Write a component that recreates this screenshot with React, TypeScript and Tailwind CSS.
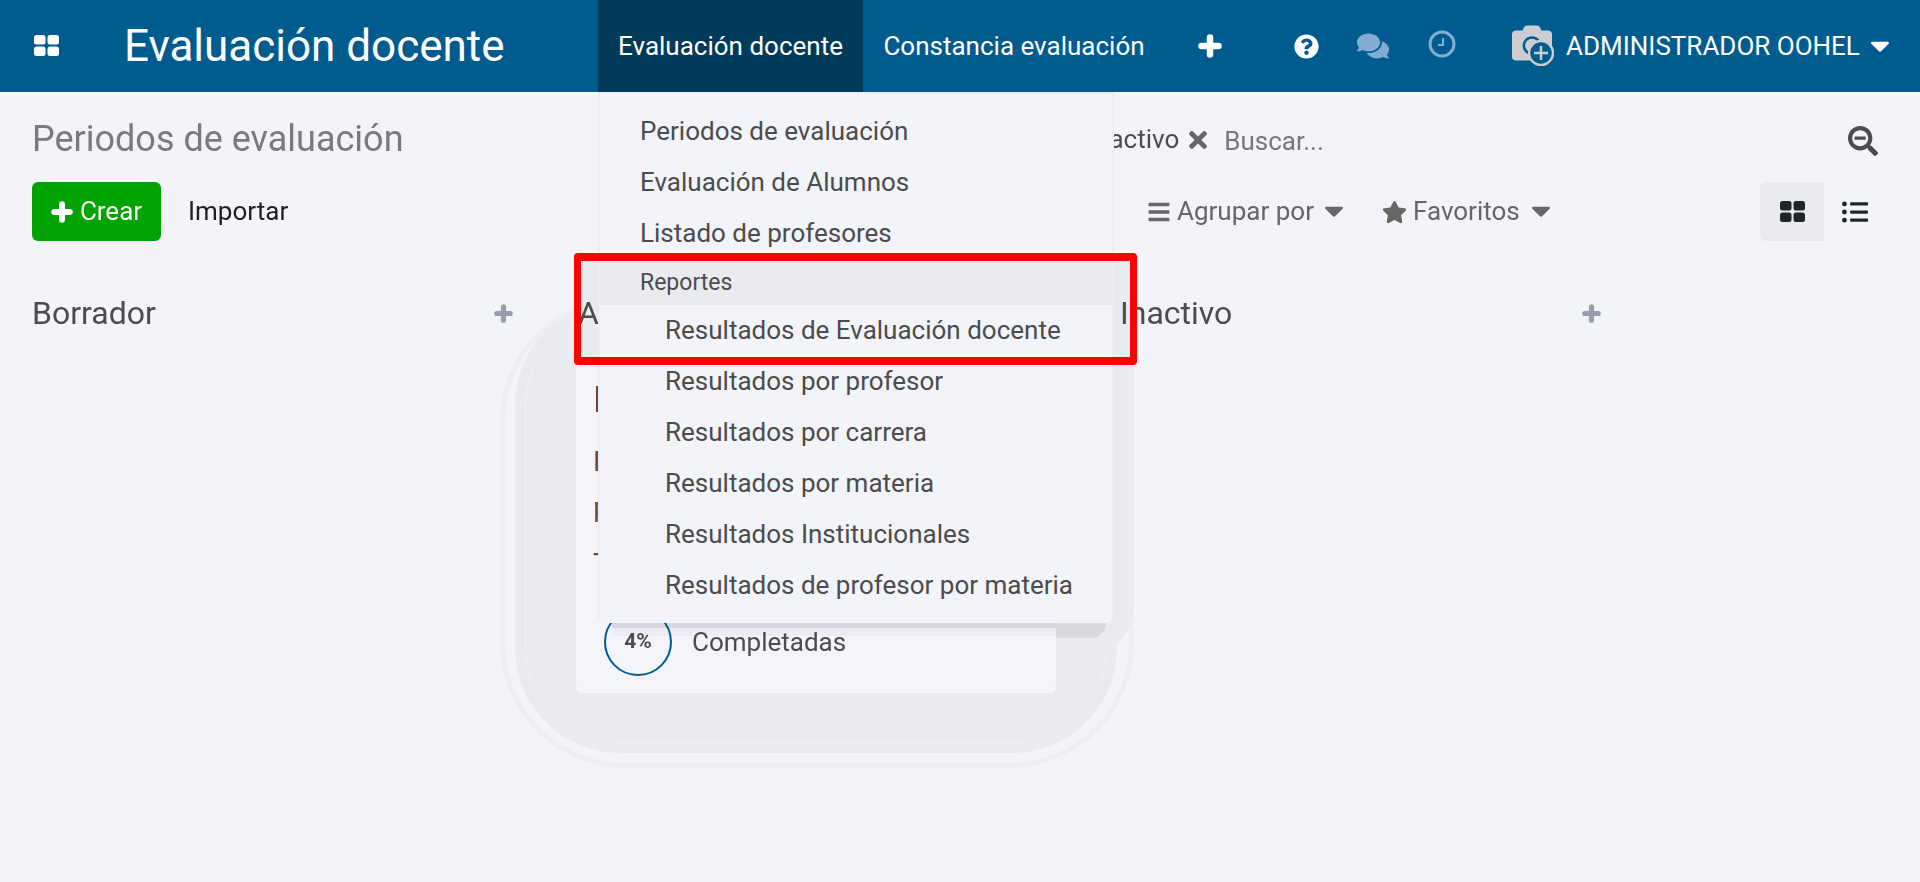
import { FaCaretDown, FaComments, FaListUl, FaQuestionCircle, FaSearchMinus, FaStar, FaTimes, FaBars, FaCamera } from "react-icons/fa";

const topItems = ["Periodos de evaluación", "Evaluación de Alumnos", "Listado de profesores"];
const subItems = [
  "Resultados de Evaluación docente",
  "Resultados por profesor",
  "Resultados por carrera",
  "Resultados por materia",
  "Resultados Institucionales",
  "Resultados de profesor por materia",
];

function GridIcon({ className }: { className: string }) {
  return (
    <svg viewBox="0 0 25 21" className={className} fill="currentColor">
      <rect x="0" y="0" width="11.5" height="9.5" rx="2.5" />
      <rect x="13.5" y="0" width="11.5" height="9.5" rx="2.5" />
      <rect x="0" y="11.5" width="11.5" height="9.5" rx="2.5" />
      <rect x="13.5" y="11.5" width="11.5" height="9.5" rx="2.5" />
    </svg>
  );
}

function PlusIcon({ className }: { className: string }) {
  return (
    <svg viewBox="0 0 24 24" className={className} fill="none" stroke="currentColor" strokeWidth="6.5" strokeLinecap="round">
      <path d="M12 3.5v17M3.5 12h17" />
    </svg>
  );
}

function Header() {
  return (
    <header className="relative z-30 flex h-[92px] items-center bg-[#005b8f] text-[26px] text-white">
      <div className="flex h-full w-[598px] items-center">
        <GridIcon className="ml-[34px] h-[21px] w-[25px] -translate-y-px" />
        <span className="ml-[65px] whitespace-nowrap text-[44px] leading-none">Evaluación docente</span>
      </div>
      <div className="flex h-full w-[265px] items-center justify-center bg-[#023a5a]">Evaluación docente</div>
      <div className="flex h-full w-[302px] items-center justify-center">Constancia evaluación</div>
      <PlusIcon className="ml-[33px] h-[24px] w-[24px]" />
      <FaQuestionCircle className="ml-[72px] h-[25px] w-[25px]" />
      <FaComments className="ml-[38px] h-[32px] w-[32px] text-[#83add0]" />
      <svg viewBox="0 0 28 28" className="ml-[39px] h-[28px] w-[28px] -translate-y-[2px] text-[#83add0]" fill="none" stroke="currentColor">
        <circle cx="14" cy="14" r="12" strokeWidth="3" />
        <path d="M15 8v7h-5" strokeWidth="2" />
      </svg>
      <div className="relative ml-[56px] h-[40px] w-[40px] -translate-y-[3px]">
        <FaCamera className="h-[40px] w-[40px] text-[#cbcdd2]" />
        <svg viewBox="0 0 26 26" className="absolute left-[16px] top-[17px] h-[26px] w-[26px]">
          <circle cx="13" cy="13" r="12" fill="#005b8f" stroke="#cbcdd2" strokeWidth="2.5" />
          <path d="M13 6v14M6 13h14" stroke="#cbcdd2" strokeWidth="2.5" />
        </svg>
      </div>
      <span className="ml-[14px] whitespace-nowrap">ADMINISTRADOR OOHEL</span>
      <FaCaretDown className="ml-[10px] h-[31px] w-[20px] -translate-y-[1px]" />
    </header>
  );
}

function ControlPanel() {
  return (
    <section className="relative z-10 text-[26px]">
      <div className="mt-[16px] flex h-[62px] items-center pl-[32px] pr-[42px]">
        <h1 className="w-[1056px] text-[36px] font-normal leading-none text-[#7b7a7a]">Periodos de evaluación</h1>
        <span className="text-[#4c4c4c]">Inactivo</span>
        <FaTimes className="ml-[10px] h-[26px] w-[18px] translate-y-[1px] text-[#666]" />
        <span className="ml-[17px] flex-1 translate-y-[2px] text-[#777]">Buscar...</span>
        <FaSearchMinus className="h-[30px] w-[30px] translate-y-[2px] text-[#4c4c4c]" />
      </div>
      <div className="mt-[12px] flex h-[59px] items-center pl-[32px]">
        <button className="flex h-[59px] w-[129px] items-center justify-center gap-[7px] rounded-[6px] bg-[#01a301] text-white">
          <PlusIcon className="h-[22px] w-[22px]" />
          Crear
        </button>
        <span className="ml-[27px] w-[102px] text-[#1f1f1f]">Importar</span>
        <div className="ml-[857px] flex items-center whitespace-nowrap text-[#666]">
          <FaBars className="h-[24px] w-[24px]" />
          <span className="ml-[6px] w-[136px]">Agrupar por</span>
          <FaCaretDown className="ml-[11px] h-[31px] w-[20px] -translate-y-[1px]" />
          <FaStar className="ml-[38px] h-[24px] w-[25px]" />
          <span className="ml-[6px] w-[106px]">Favoritos</span>
          <FaCaretDown className="ml-[12px] h-[31px] w-[20px] -translate-y-[1px]" />
        </div>
        <div className="ml-[209px] flex h-[59px] w-[64px] items-center justify-center rounded-l-[6px] bg-[#eaebf0]">
          <GridIcon className="h-[21px] w-[25px] text-[#212529]" />
        </div>
        <FaListUl className="ml-[18px] h-[26px] w-[26px] text-[#212529]" />
      </div>
    </section>
  );
}

function ColumnTitle({ title }: { title: string }) {
  return (
    <div className="flex h-[40px] w-[481px] items-center justify-between text-[32px] text-[#4c4c4c]">
      <span>{title}</span>
      <PlusIcon className="h-[19px] w-[19px] text-[#9a9eac]" />
    </div>
  );
}

function Kanban() {
  return (
    <section className="relative z-10 mt-[52px] flex pl-[32px]">
      <div className="w-[480px]">
        <ColumnTitle title="Borrador" />
      </div>
      <div className="ml-[66px] w-[480px]">
        <ColumnTitle title="Activo" />
        <div className="mt-[27px] -ml-[2px] h-[333px] w-[480px] rounded-[6px] bg-[#f4f5fb] pl-[17px] pt-[20px] text-[#4c4c4c]">
          <div className="text-[36px] leading-[40px] text-[#6b4a35]">Periodo</div>
          <div className="mt-[22px] text-[27px] leading-[40px] text-[#6b4a35]">Inicio</div>
          <div className="mt-[11px] text-[27px] leading-[40px] text-[#6b4a35]">Fin</div>
          <div className="mt-[11px] text-[27px] leading-[40px] text-[#6b4a35]">Total</div>
          <div className="ml-[11px] mt-[24px] flex items-center">
            <div className="flex h-[68px] w-[68px] items-center justify-center rounded-full border-2 border-[#005b8f] text-[21px] font-bold">
              4%
            </div>
            <span className="ml-[20px] text-[26px]">Completadas</span>
          </div>
        </div>
      </div>
      <div className="ml-[62px] w-[480px]">
        <ColumnTitle title="Inactivo" />
      </div>
    </section>
  );
}

function Menu() {
  return (
    <div className="absolute left-[598px] top-[92px] z-20 w-[516px] rounded-b-[8px] border-x-2 border-t-2 border-[#eceef4] bg-[#f2f4fa] pb-[12px] pt-[12px] text-[26px] text-[#4c4c4c]">
      {topItems.map((t) => (
        <div key={t} className="flex h-[51px] items-center pl-[40px]">
          {t}
        </div>
      ))}
      <div className="mt-[3px] flex h-[43px] items-center bg-[#eaebf0] pl-[40px] text-[23px]">Reportes</div>
      {subItems.map((t) => (
        <div key={t} className="flex h-[51px] items-center pl-[65px]">
          {t}
        </div>
      ))}
    </div>
  );
}

function MenuShadow() {
  return (
    <>
      <div className="absolute left-[612px] top-[623px] z-[15] h-[13px] w-[444px] bg-[#f7f7f8] mix-blend-multiply" />
      <div className="absolute left-[612px] top-[623px] z-[15] h-[5px] w-[444px] bg-[#e8e8ea] mix-blend-multiply" />
      <div className="absolute left-[1056px] top-[623px] z-[15] h-[15px] w-[50px] rounded-br-[50px] bg-[#d8dade]" />
    </>
  );
}

function Halo() {
  return (
    <>
      <div className="absolute left-[500px] top-[296px] h-[472px] w-[634px] rounded-[125px] border-[5px] border-[#eceef3]" />
      <div className="absolute left-[515px] top-[300px] h-[453px] w-[602px] rounded-[105px] bg-[#eaebf0]">
        <div className="absolute inset-[10px] rounded-[95px] border border-[#f1f2f7]" />
      </div>
      <div className="absolute left-[1090px] top-[305px] h-[345px] w-[44px] rounded-br-[40px] bg-[#eaebf0]" />
      <div className="absolute left-[582px] top-[262px] h-[95px] w-[548px] bg-[#eaebf0]" />
    </>
  );
}

export default function App() {
  return (
    <div className="relative h-[882px] w-[1920px] overflow-hidden bg-[#f3f4fa] font-['Roboto',sans-serif]">
      <Header />
      <Halo />
      <ControlPanel />
      <Kanban />
      <MenuShadow />
      <Menu />
      <div className="absolute left-[574px] top-[253px] z-30 h-[112px] w-[563px] rounded-[4px] border-x-[7px] border-y-[8px] border-[#ff0000]" />
    </div>
  );
}
